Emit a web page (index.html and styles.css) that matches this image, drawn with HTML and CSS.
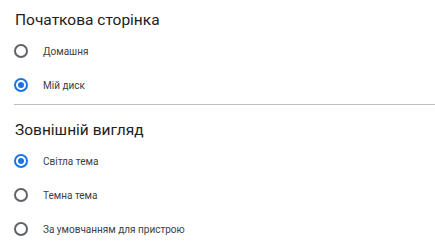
FILE: index.html
```html
<!DOCTYPE html>
<html lang="uk">
<head>
<meta charset="utf-8">
<link rel="stylesheet" href="styles.css">
</head>
<body>
<div class="page">
  <section class="group">
    <h2 class="title">Початкова сторінка</h2>
    <div class="option"><span class="radio"></span><span class="label">Домашня</span></div>
    <div class="option"><span class="radio checked"></span><span class="label">Мій диск</span></div>
  </section>
  <hr class="divider">
  <section class="group second">
    <h2 class="title">Зовнішній вигляд</h2>
    <div class="option"><span class="radio checked"></span><span class="label">Світла тема</span></div>
    <div class="option"><span class="radio"></span><span class="label">Темна тема</span></div>
    <div class="option"><span class="radio"></span><span class="label">За умовчанням для пристрою</span></div>
  </section>
</div>
</body>
</html>
```

FILE: styles.css
```css
html, body {
  margin: 0;
  padding: 0;
  background: #ffffff;
}
body {
  font-family: Roboto, "Liberation Sans", Arial, sans-serif;
  color: #202124;
}
.page {
  padding-left: 14px;
  width: 421px;
}
.group {
  display: flex;
  flex-direction: column;
}
.title {
  margin: 10px 0 4px 1px;
  font-size: 15.5px;
  line-height: 20px;
  font-weight: 400;
  color: #202124;
}
.second .title {
  margin-top: 15px;
}
.option {
  height: 34px;
  display: flex;
  align-items: center;
  gap: 15px;
}
.radio {
  box-sizing: border-box;
  width: 14px;
  height: 14px;
  margin-left: 0;
  border: 2px solid #5f6368;
  border-radius: 50%;
  display: flex;
  align-items: center;
  justify-content: center;
  flex: none;
}
.radio.checked {
  border-color: #1a73e8;
}
.radio.checked::after {
  content: "";
  width: 6px;
  height: 6px;
  border-radius: 50%;
  background: #1a73e8;
}
.label {
  font-size: 10px;
  color: #3c4043;
}
.divider {
  margin: 2px 0 0 0;
  border: 0;
  border-top: 1px solid #bdbdbd;
  height: 0;
}
```
